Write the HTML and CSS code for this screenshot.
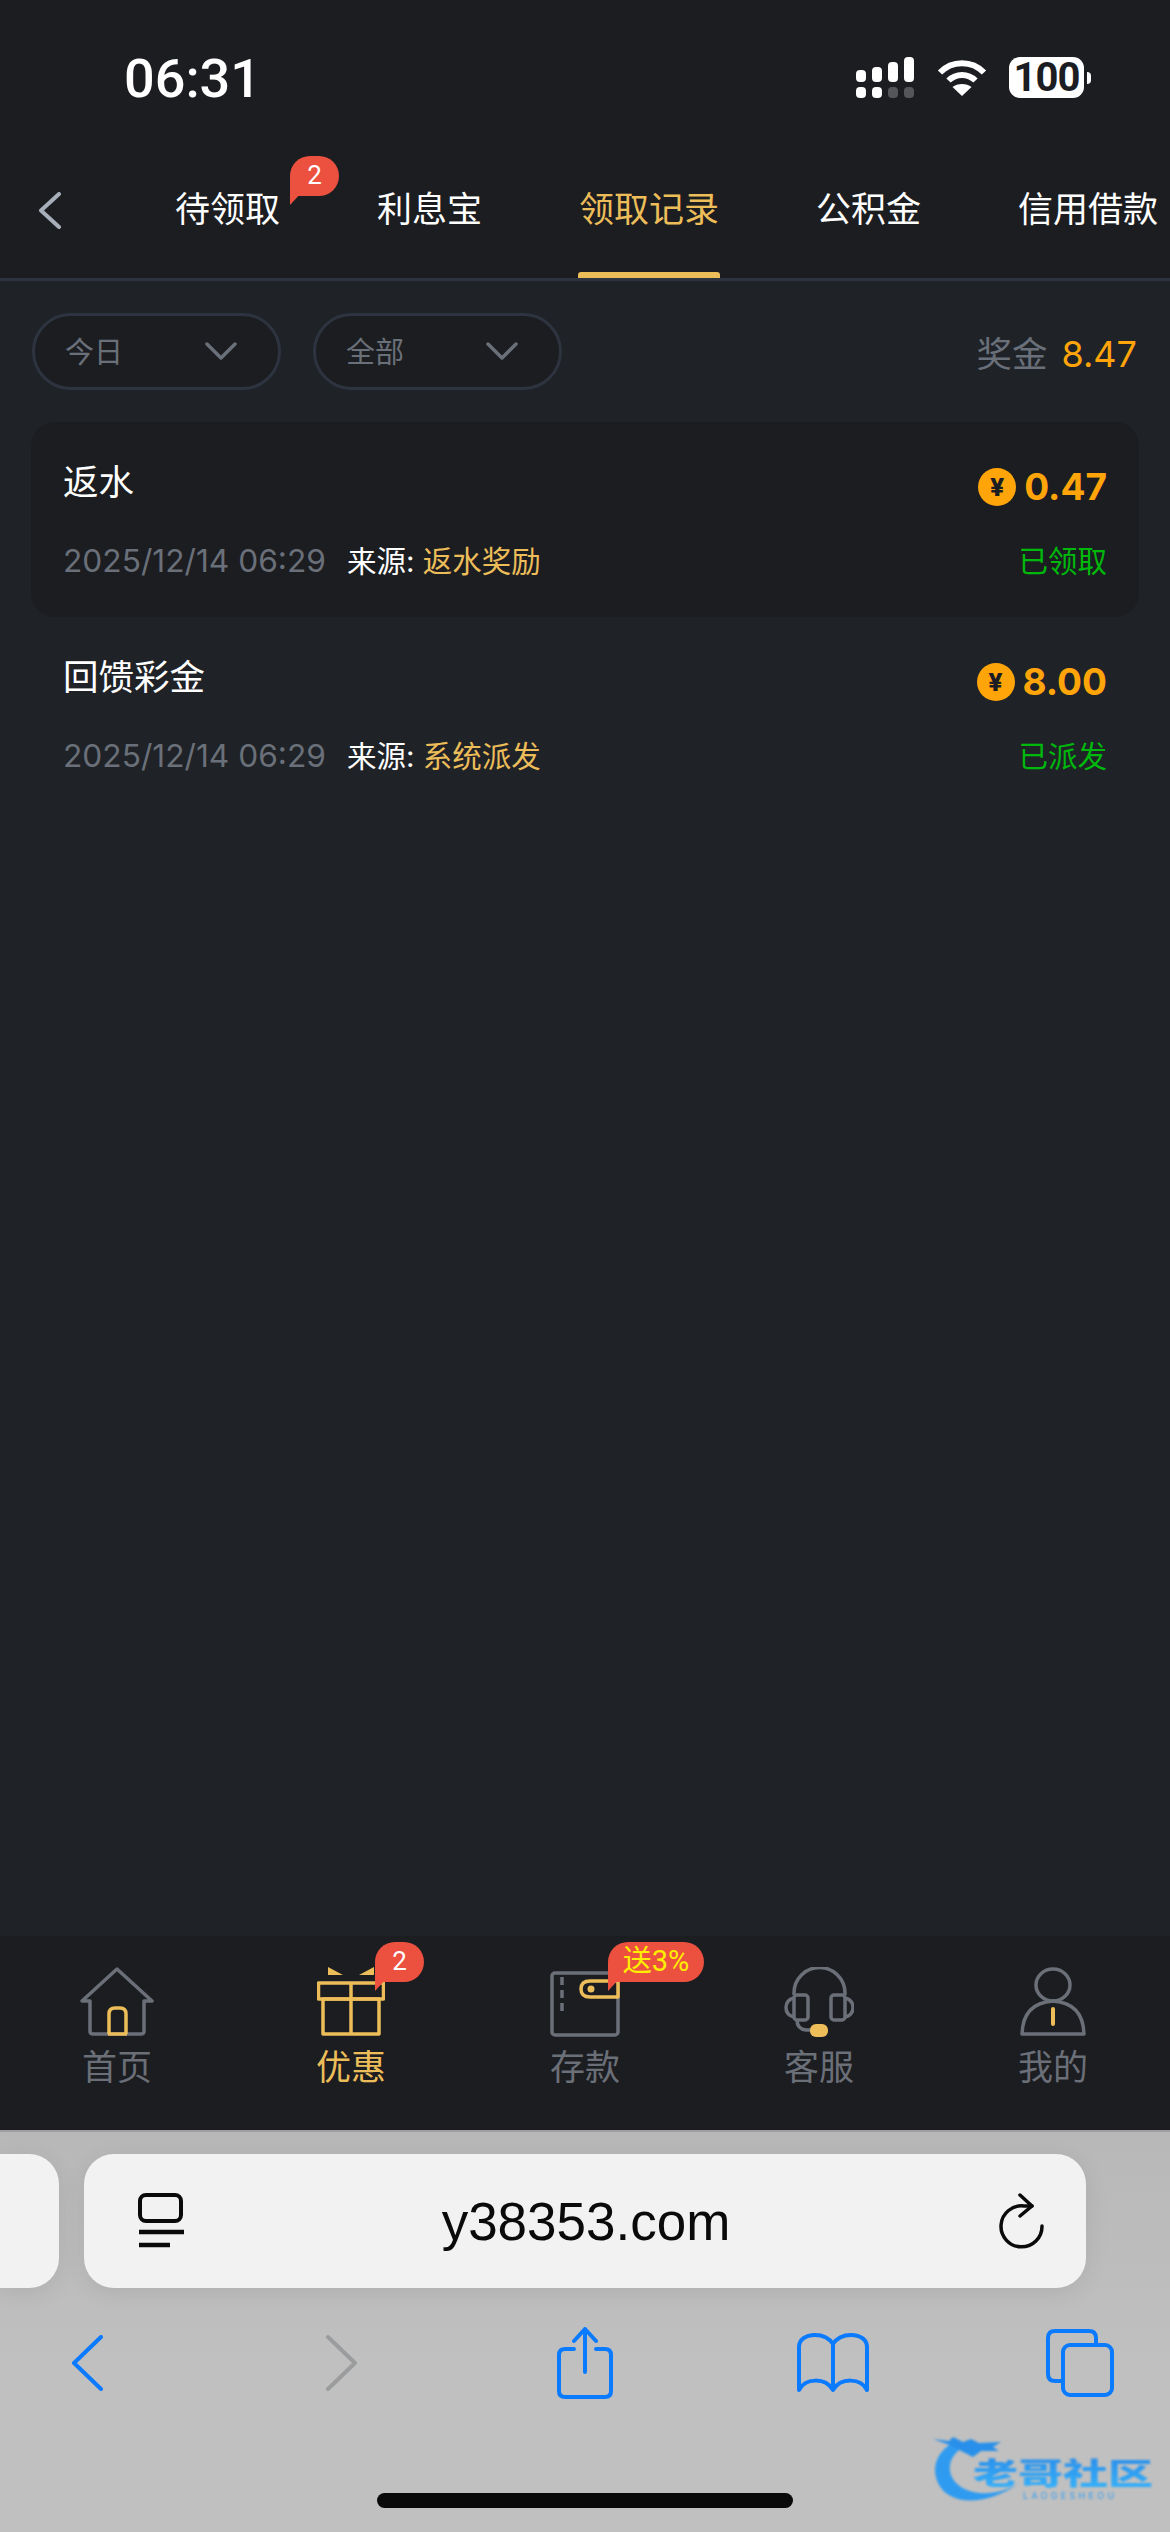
FILE: index.html
```html
<!DOCTYPE html>
<html lang="zh-CN">
<head>
    <meta charset="UTF-8">
    <meta name="viewport" content="width=device-width, initial-scale=1.0">
    <title>领取记录</title>
    <link rel="stylesheet" href="styles.css">
</head>
<body>

<div class="page">
    <header class="top">
        <div class="status">
            <span class="clock">06:31</span>
            <div class="status-icons">
                <svg class="signal" width="58" height="41" viewBox="0 0 58 41">
                    <rect x="0" y="13" width="10" height="12" rx="4" fill="#fff"/>
                    <rect x="16" y="10" width="10" height="15" rx="4" fill="#fff"/>
                    <rect x="32" y="5" width="10" height="20" rx="4" fill="#fff"/>
                    <rect x="48" y="0" width="10" height="25" rx="4" fill="#fff"/>
                    <rect x="0" y="30" width="10" height="11" rx="4" fill="#fff"/>
                    <rect x="16" y="30" width="10" height="11" rx="4" fill="#fff"/>
                    <rect x="32" y="30" width="10" height="11" rx="4" fill="#55565a"/>
                    <rect x="48" y="30" width="10" height="11" rx="4" fill="#55565a"/>
                </svg>
                <svg class="wifi" width="50" height="37" viewBox="0 0 50 37" fill="none" stroke="#fff" stroke-width="6">
                    <path d="M3 13.5C15 1 35 1 47 13.5"/>
                    <path d="M11.500 21.500C19 14 31 14 38.500 21.500"/>
                    <path d="M25 37L15.500 28C20.500 24 29.500 24 34.500 28Z" fill="#fff" stroke="none"/>
                </svg>
                <div class="battery"><span class="battery-level">100</span><i class="battery-nub"></i></div>
            </div>
        </div>
        <nav class="tabs">
            <svg class="back" width="24" height="37" viewBox="0 0 24 37" fill="none" stroke="#a7afba" stroke-width="4" stroke-linecap="round" stroke-linejoin="round">
                <path d="M21 2L3 18.500L21 35"/>
            </svg>
            <a class="tab">待领取<span class="bubble tab-bubble">2</span></a>
            <a class="tab">利息宝</a>
            <a class="tab active">领取记录</a>
            <a class="tab">公积金</a>
            <a class="tab">信用借款</a>
        </nav>
    </header>

    <main class="content">
        <div class="filters">
            <div class="pill"><span>今日</span><svg width="32" height="18" viewBox="0 0 32 18" fill="none" stroke="#6a7079" stroke-width="3.500" stroke-linecap="round" stroke-linejoin="round"><path d="M2 2L16 16L30 2"/></svg></div>
            <div class="pill"><span>全部</span><svg width="32" height="18" viewBox="0 0 32 18" fill="none" stroke="#6a7079" stroke-width="3.500" stroke-linecap="round" stroke-linejoin="round"><path d="M2 2L16 16L30 2"/></svg></div>
            <div class="total">奖金<b>8.47</b></div>
        </div>

        <div class="record record-dark">
            <div class="record-row">
                <span class="record-title">返水</span>
                <span class="amount"><i class="coin">¥</i>0.47</span>
            </div>
            <div class="record-row">
                <span class="record-meta"><span class="date">2025/12/14 06:29</span>来源: <em>返水奖励</em></span>
                <span class="state">已领取</span>
            </div>
        </div>

        <div class="record">
            <div class="record-row">
                <span class="record-title">回馈彩金</span>
                <span class="amount"><i class="coin">¥</i>8.00</span>
            </div>
            <div class="record-row">
                <span class="record-meta"><span class="date">2025/12/14 06:29</span>来源: <em>系统派发</em></span>
                <span class="state">已派发</span>
            </div>
        </div>
    </main>

    <nav class="tabbar">
        <a class="tabbar-item">
            <svg width="74" height="70" viewBox="0 0 74 70" fill="none" stroke="#6a6f78" stroke-width="3.500" stroke-linecap="round" stroke-linejoin="round">
                <path d="M10 34H2L37 2L72 34H64V64Q64 67 61 67H13Q10 67 10 64Z"/>
                <path d="M29 67V47Q29 41 35 41H40Q46 41 46 47V67" stroke="#ecbd59" stroke-linecap="butt"/>
                <path d="M28 67H47" stroke="#ecbd59" stroke-linecap="butt"/>
            </svg>
            <span>首页</span>
        </a>
        <a class="tabbar-item active">
            <svg width="68" height="70" viewBox="0 0 68 70" fill="none" stroke="#ecbd59" stroke-width="3.500" stroke-linejoin="round">
                <rect x="1.500" y="16" width="65" height="16"/>
                <rect x="6" y="32" width="56" height="35"/>
                <path d="M34 16V67"/>
                <path d="M11 0L26 8H11Z" fill="#ecbd59" stroke="none"/>
                <path d="M57 0L42 8H57Z" fill="#ecbd59" stroke="none"/>
            </svg>
            <span>优惠</span>
            <span class="bubble nav-bubble">2</span>
        </a>
        <a class="tabbar-item">
            <svg width="70" height="70" viewBox="0 0 70 70" fill="none" stroke="#6a6f78" stroke-width="3.500" stroke-linejoin="round">
                <rect x="2" y="6" width="66" height="62" rx="3"/>
                <path d="M12 10V46" stroke-dasharray="8 5"/>
                <path d="M68 14H40Q31 14 31 22Q31 30 40 30H68Z" fill="#1c1d22" stroke="#ecbd59"/>
                <circle cx="41" cy="22" r="3.500" fill="#ecbd59" stroke="none"/>
            </svg>
            <span>存款</span>
            <span class="bubble nav-bubble gift-bubble">送3%</span>
        </a>
        <a class="tabbar-item">
            <svg width="70" height="70" viewBox="0 0 70 70" fill="none" stroke="#6a6f78" stroke-width="3.500" stroke-linejoin="round">
                <path d="M10 28V26A25 25 0 0 1 61 26V28"/>
                <rect x="10" y="28" width="14" height="25" rx="3"/>
                <rect x="47" y="28" width="14" height="25" rx="3"/>
                <path d="M10 31Q2 33 2 40.500Q2 48 10 50"/>
                <path d="M61 31Q69 33 69 40.500Q69 48 61 50"/>
                <path d="M13 53Q13 62 22 63H28"/>
                <rect x="26" y="57" width="18" height="13" rx="6" fill="#ecbd59" stroke="none"/>
            </svg>
            <span>客服</span>
        </a>
        <a class="tabbar-item">
            <svg width="66" height="70" viewBox="0 0 66 70" fill="none" stroke="#6a6f78" stroke-width="3.500" stroke-linejoin="round">
                <ellipse cx="33" cy="18" rx="17" ry="16"/>
                <path d="M2 67Q3 36 33 34Q63 36 64 67Z"/>
                <path d="M33 42V57" stroke="#ecbd59" stroke-width="4" stroke-linecap="round"/>
            </svg>
            <span>我的</span>
        </a>
    </nav>

    <footer class="browser">
        <div class="address-row">
            <div class="side-tab"></div>
            <div class="address">
                <svg width="46" height="56" viewBox="0 0 46 56" fill="none" stroke="#0a0a0a" stroke-width="4">
                    <rect x="2" y="2" width="41" height="26" rx="6"/>
                    <path d="M1 39H46" stroke-width="4.500"/>
                    <path d="M1 52H32" stroke-width="4.500"/>
                </svg>
                <span class="url">y38353.com</span>
                <svg width="46" height="56" viewBox="0 0 46 56" fill="none" stroke="#0a0a0a" stroke-width="3.500" stroke-linecap="round" stroke-linejoin="round">
                    <path d="M43 33A20.500 20.500 0 1 1 25 13H33"/>
                    <path d="M21 2L33 13L21 23"/>
                </svg>
            </div>
        </div>
        <div class="toolbar">
            <svg class="tool-back" width="32" height="56" viewBox="0 0 32 56" fill="none" stroke="#0a7aff" stroke-width="4" stroke-linecap="round" stroke-linejoin="round"><path d="M30 2L3 28L30 54"/></svg>
            <svg class="tool-forward" width="32" height="56" viewBox="0 0 32 56" fill="none" stroke="#9b9c9d" stroke-width="4" stroke-linecap="round" stroke-linejoin="round"><path d="M2 2L29 28L2 54"/></svg>
            <svg class="tool-share" width="56" height="72" viewBox="0 0 56 72" fill="none" stroke="#0a7aff" stroke-width="4" stroke-linecap="round" stroke-linejoin="round">
                <path d="M17 22H8Q2 22 2 28V64Q2 70 8 70H48Q54 70 54 64V28Q54 22 48 22H39"/>
                <path d="M28 45V2M17 14L28 2L39 14"/>
            </svg>
            <svg class="tool-book" width="72" height="60" viewBox="0 0 72 60" fill="none" stroke="#0a7aff" stroke-width="4" stroke-linejoin="round">
                <path d="M36 57V11C32 5 26 2 18 2C8 2 2 7 2 14V57C8 45 28 44 36 57C44 44 64 45 70 57V14C70 7 64 2 54 2C46 2 40 5 36 11"/>
            </svg>
            <svg class="tool-tabs" width="68" height="68" viewBox="0 0 68 68" fill="none" stroke="#0a7aff" stroke-width="4" stroke-linejoin="round">
                <path d="M15 52H9Q2 52 2 45V9Q2 2 9 2H43Q50 2 50 9V15"/>
                <rect x="17" y="16" width="49" height="50" rx="7"/>
            </svg>
        </div>
        <div class="home-bar"></div>
        <div class="watermark">
            <svg class="dragon" width="90" height="72" viewBox="0 0 90 72" fill="none">
                <path d="M20 10C4 18 -3 36 6 52C16 70 48 76 87 50C60 66 30 62 20 46C13 34 18 22 30 14Z" fill="#2f9bf0"/>
                <path d="M0 6L16 8L20 4L30 9L38 6L46 10L68 9L60 14L66 18L48 18L40 24L24 16L14 11Z" fill="#2890ea"/>
            </svg>
            <span class="watermark-name">老哥社区</span>
            <span class="watermark-sub">LAOGESHEOU</span>
        </div>
    </footer>
</div>

</body>
</html>
```

FILE: styles.css
```css
* { box-sizing: border-box; }
html, body { margin: 0; padding: 0; }
body { background-color: #1f2227; color: #fff; font-family: Inter, "Noto Sans CJK SC", sans-serif; }
.page { width: 1170px; height: 2532px; display: flex; flex-direction: column; overflow: hidden; }

/* header: status bar and tabs */
.top { height: 281px; background-color: #1c1d21; border-bottom: 3px solid #2d3440; overflow: hidden; }
.status { height: 156px; padding: 57px 79px 0 124px; display: flex; justify-content: space-between; align-items: flex-start; }
.clock { font-family: Roboto, sans-serif; font-size: 54px; font-weight: 500; line-height: 43px; }
.status-icons { display: flex; align-items: flex-start; }
.signal { margin-right: 23px; }
.wifi { margin-top: 2px; margin-right: 22px; }
.battery { position: relative; width: 75px; height: 41px; margin-right: 7px; border-radius: 11px; background-color: #fff; color: #1c1d22; font-family: Roboto, sans-serif; font-size: 40px; font-weight: 700; line-height: 41px; text-align: center; }
.battery-level { letter-spacing: -1px; }
.battery-nub { position: absolute; left: 78px; top: 15px; width: 4px; height: 12px; border-radius: 0 4px 4px 0; background-color: #fff; }

.tabs { display: flex; height: 122px; padding-left: 38px; gap: 97px; white-space: nowrap; }
.back { margin-top: 36px; margin-right: 16px; flex: none; }
.tab { position: relative; flex: none; height: 122px; padding-top: 30px; font-size: 35px; line-height: 46px; color: #fff; }
.tab.active { color: #ecbd59; }
.tab.active::after { content: ""; position: absolute; left: -1px; right: -1px; bottom: 0; height: 6px; border-radius: 3px 3px 0 0; background-color: #ecbd59; }

/* little red speech bubbles */
.bubble { position: absolute; height: 40px; min-width: 49px; padding: 0 9px; border-radius: 20px 20px 20px 0; background-color: #ec513f; color: #fff; font-family: Roboto, "Noto Sans CJK SC", sans-serif; font-size: 26px; line-height: 38px; text-align: center; }
.bubble::after { content: ""; position: absolute; left: 0; top: 36px; width: 12px; height: 13px; background-color: #ec513f; clip-path: polygon(0 0, 100% 0, 0 100%); }
.tab-bubble { left: 115px; top: 0; }

/* filters */
.content { flex: 1; }
.filters { display: flex; align-items: center; padding: 32px 33px 0 32px; gap: 32px; }
.pill { width: 249px; height: 77px; padding: 0 41px 0 30px; display: flex; justify-content: space-between; align-items: center; border: 3px solid #2d3440; border-radius: 39px; background-color: #1c1d21; color: #6a7079; font-size: 29px; }
.pill span { margin-top: -4px; }
.pill svg { margin-top: -2px; }
.total { margin-left: auto; font-size: 35.500px; color: #6a7079; }
.total b { margin-left: 14px; font-size: 36px; font-weight: 400; color: #ffa50a; }

/* records */
.record { height: 195px; margin: 0 31px; padding: 38px 32px 0 32px; }
.record-dark { margin-top: 32px; border-radius: 24px; background-color: #1c1d21; }
.record-row { display: flex; justify-content: space-between; align-items: center; height: 44px; margin-bottom: 33px; }
.record-title { margin-top: 2px; font-size: 35.500px; line-height: 44px; }
.amount { display: flex; align-items: center; margin-top: 9px; font-size: 37px; font-weight: 700; color: #ffa50a; }
.coin { display: block; width: 38px; height: 38px; margin-right: 8px; border-radius: 50%; background-color: #ffa50a; color: #1c1d22; font-size: 25px; font-style: normal; font-weight: 800; line-height: 38px; text-align: center; }
.record-meta { font-size: 29.500px; }
.date { margin-right: 21px; font-size: 31.700px; color: #6a7079; }
.record-meta em { font-style: normal; color: #ecbd59; }
.state { font-size: 29.500px; color: #00b80c; }

/* bottom nav */
.tabbar { height: 194px; padding-top: 31px; display: grid; grid-template-columns: repeat(5, 234px); background-color: #1c1d21; position: relative; }
.tabbar-item { position: relative; display: flex; flex-direction: column; align-items: center; color: #6a6f78; font-size: 35px; line-height: 44px; }
.tabbar-item span:not(.bubble) { margin-top: 8px; }
.tabbar-item.active { color: #ecbd59; }
.nav-bubble { left: 141px; top: -25px; }
.gift-bubble { left: 140px; width: 96px; padding: 0; font-size: 29px; color: #ffee00; border-radius: 20px; border-bottom-left-radius: 0; }

/* safari chrome */
.browser { position: relative; height: 402px; border-top: 2px solid #9e9e9e; background: linear-gradient(#b8b8b8, #c0c0c0 60%); }
.address-row { display: flex; gap: 25px; padding-top: 22px; }
.side-tab { width: 59px; height: 134px; border-radius: 0 30px 30px 0; background-color: #f2f2f2; box-shadow: 0 4px 24px rgba(0, 0, 0, 0.08); }
.address { width: 1002px; height: 134px; padding: 0 41px 0 54px; display: flex; justify-content: space-between; align-items: center; border-radius: 30px; background-color: #f2f2f2; box-shadow: 0 4px 24px rgba(0, 0, 0, 0.08); }
.url { margin-right: 11px; font-family: "Liberation Sans", sans-serif; font-size: 53px; color: #0a0a0a; }
.toolbar { display: flex; align-items: center; height: 72px; margin-top: 39px; padding-left: 71px; }
.tool-forward { margin-left: 223px; }
.tool-share { margin-left: 199px; }
.tool-book { margin-left: 184px; }
.tool-tabs { margin-left: 177px; }
.home-bar { position: absolute; left: 377px; top: 361px; width: 416px; height: 15px; border-radius: 8px; background-color: #0a0a0a; }

/* site watermark, sits over the toolbar corner */
.watermark { position: absolute; left: 933px; top: 301px; width: 225px; height: 72px; filter: blur(1px); }
.dragon { position: absolute; left: 0; top: 0; overflow: visible; }
.watermark-name { position: absolute; left: 40px; top: 14px; height: 54px; font-size: 45px; font-weight: 900; line-height: 54px; white-space: nowrap; background: linear-gradient(#2a8eea, #37b4fb); -webkit-background-clip: text; background-clip: text; color: transparent; transform: scaleY(0.65); }
.watermark-sub { position: absolute; left: 90px; top: 58px; font-size: 9px; line-height: 10px; letter-spacing: 3.300px; color: #2f9bf0; }
```
